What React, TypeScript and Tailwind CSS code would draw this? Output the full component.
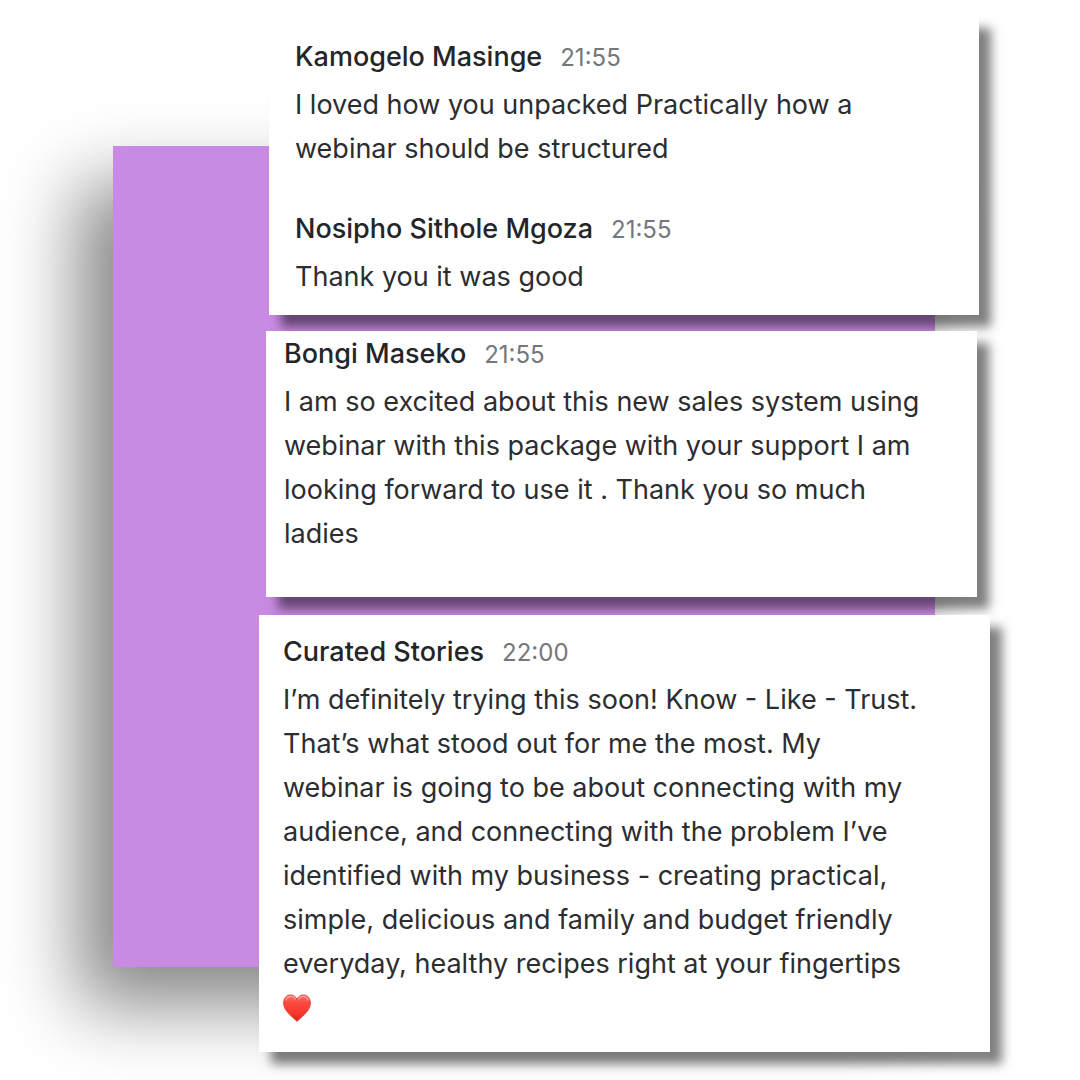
import { useId } from "react";

type MessageProps = {
    name: string;
    time: string;
    lines: string[];
    heart?: boolean;
};

function Heart() {
    const id = useId();

    return (
        <svg viewBox="0 0 28 28" className="block h-7 w-7" role="img" aria-label="Red heart">
            <defs>
                <linearGradient id={id} x1="0" y1="0" x2="0" y2="1">
                    <stop offset="0" stopColor="#ff6f66" />
                    <stop offset="0.3" stopColor="#fb4a42" />
                    <stop offset="0.7" stopColor="#f8352d" />
                    <stop offset="1" stopColor="#d8241c" />
                </linearGradient>
            </defs>
            <path
                d="M14 27.4C11.6 24.9 7.2 21.6 4 17.6C1.8 14.9 0.6 12.2 0.6 9C0.6 4.2 3.7 0.9 7.5 0.9C10.5 0.9 12.8 2.7 14 5.3C15.2 2.7 17.5 0.9 20.5 0.9C24.3 0.9 27.4 4.2 27.4 9C27.4 12.2 26.2 14.9 24 17.6C20.8 21.6 16.4 24.9 14 27.4Z"
                fill={`url(#${id})`}
                stroke="#d5382f"
                strokeWidth="0.8"
            />
            <path d="M3 6C4 3.4 6 2.4 8 2.4C10 2.4 11.4 3.4 12.4 5" fill="none" stroke="#ffa59e" strokeWidth="1.2" strokeLinecap="round" />
            <path d="M15.6 5C16.6 3.4 18 2.4 20 2.4C22 2.4 24 3.4 25 6" fill="none" stroke="#ffa59e" strokeWidth="1.2" strokeLinecap="round" />
        </svg>
    );
}

function Message({ name, time, lines, heart }: MessageProps) {
    return (
        <article>
            <header className="mb-[3px] flex items-baseline gap-[18px] leading-[44px]">
                <h2 className="text-[27px] font-medium text-[#242528]">{name}</h2>
                <time className="text-2xl leading-[44px] text-[#74777b]">{time}</time>
            </header>
            <p className="text-[27px] leading-[44px] text-[#2c2d30]">
                {lines.map((line) => (
                    <span key={line} className="block">
                        {line}
                    </span>
                ))}
            </p>
            {heart && (
                <div className="flex h-11 items-center">
                    <Heart />
                </div>
            )}
        </article>
    );
}

export default function App() {
    return (
        <main className="grid min-h-screen overflow-hidden bg-white font-['Inter',sans-serif]">
            {/* Purple backdrop, shares the grid cell with the cards */}
            <div className="col-start-1 row-start-1 mt-[146px] mr-[145px] mb-[113px] ml-[113px] bg-[#c98ae4] shadow-[-34px_38px_70px_rgba(0,0,0,0.48)]" />

            <div className="z-10 col-start-1 row-start-1 mr-[90px] ml-[259px] flex flex-col pt-4">
                <section className="mr-[11px] ml-[10px] flex flex-col gap-9 bg-white px-[26px] pt-[19px] pb-4 shadow-[12px_12px_10px_rgba(0,0,0,0.5)]">
                    <Message
                        name="Kamogelo Masinge"
                        time="21:55"
                        lines={["I loved how you unpacked Practically how a", "webinar should be structured"]}
                    />
                    <Message name="Nosipho Sithole Mgoza" time="21:55" lines={["Thank you it was good"]} />
                </section>

                <section className="z-10 mt-4 mr-[13px] ml-[7px] bg-white px-[18px] pt-px pb-[41px] shadow-[12px_12px_10px_rgba(0,0,0,0.5)]">
                    <Message
                        name="Bongi Maseko"
                        time="21:55"
                        lines={[
                            "I am so excited about this new sales system using",
                            "webinar with this package with your support I am",
                            "looking forward to use it . Thank you so much",
                            "ladies",
                        ]}
                    />
                </section>

                <section className="z-20 mt-[18px] bg-white px-6 pt-[15px] pb-[22px] shadow-[12px_12px_10px_rgba(0,0,0,0.5)]">
                    <Message
                        name="Curated Stories"
                        time="22:00"
                        lines={[
                            "I’m definitely trying this soon! Know - Like - Trust.",
                            "That’s what stood out for me the most. My",
                            "webinar is going to be about connecting with my",
                            "audience, and connecting with the problem I’ve",
                            "identified with my business - creating practical,",
                            "simple, delicious and family and budget friendly",
                            "everyday, healthy recipes right at your fingertips",
                        ]}
                        heart
                    />
                </section>
            </div>
        </main>
    );
}
